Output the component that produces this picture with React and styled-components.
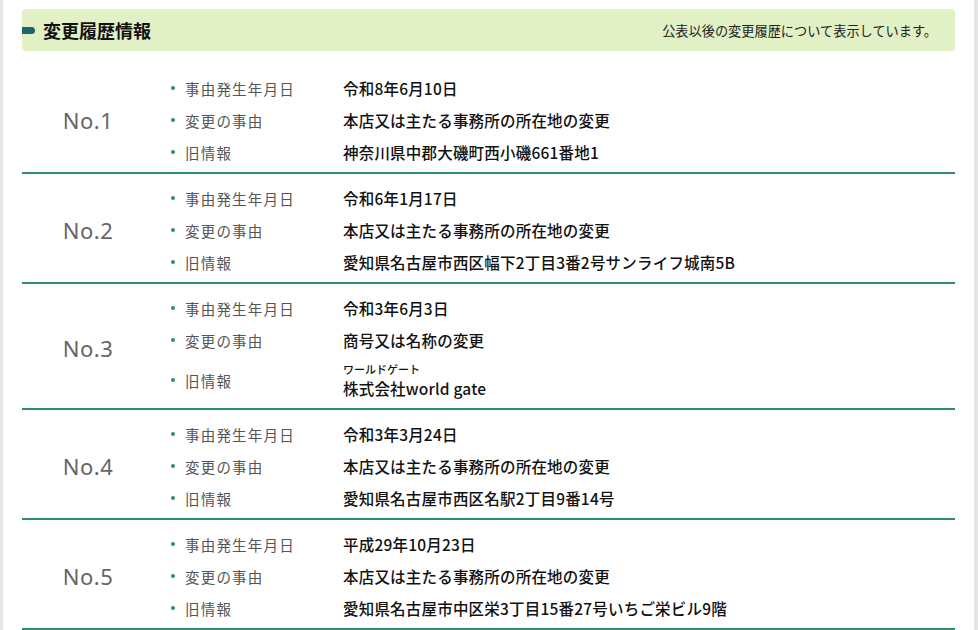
import styled, { createGlobalStyle } from 'styled-components';

const history = [
	{ no: 1, date: '令和8年6月10日', reason: '本店又は主たる事務所の所在地の変更', old: '神奈川県中郡大磯町西小磯661番地1' },
	{ no: 2, date: '令和6年1月17日', reason: '本店又は主たる事務所の所在地の変更', old: '愛知県名古屋市西区幅下2丁目3番2号サンライフ城南5B' },
	{ no: 3, date: '令和3年6月3日', reason: '商号又は名称の変更', old: '株式会社world gate', kana: 'ワールドゲート' },
	{ no: 4, date: '令和3年3月24日', reason: '本店又は主たる事務所の所在地の変更', old: '愛知県名古屋市西区名駅2丁目9番14号' },
	{ no: 5, date: '平成29年10月23日', reason: '本店又は主たる事務所の所在地の変更', old: '愛知県名古屋市中区栄3丁目15番27号いちご栄ビル9階' },
];

const GlobalStyle = createGlobalStyle`
	html, body {
		margin: 0;
		padding: 0;
		background: #e6e6e6;
	}
	body {
		font-family: 'Noto Sans CJK JP', 'Noto Sans', sans-serif;
		color: #111;
	}
`;

const Page = styled.div`
	margin: 0 4px 0 3px;
	min-height: 100vh;
	background: #fff;
	padding: 9px 19px 0 19px;
	box-sizing: border-box;
`;

const Header = styled.div`
	height: 42px;
	background: #e2f0c6;
	border-radius: 4px;
	display: flex;
	align-items: center;
	justify-content: space-between;
	padding-right: 18px;
`;

const Title = styled.h2`
	margin: 0;
	display: flex;
	align-items: center;
	gap: 8px;
	font-size: 18px;
	font-weight: 700;
	color: #111;

	&::before {
		content: '';
		width: 13px;
		height: 7px;
		border-radius: 0 4px 4px 0;
		background: #1f6468;
	}
`;

const Note = styled.p`
	margin: 0;
	font-size: 13.2px;
	color: #222;
`;

const List = styled.div`
	margin-top: 13px;
`;

const Row = styled.div`
	display: grid;
	grid-template-columns: 132px 1fr;
	align-items: center;
	padding: 8px 0 4px;
	border-bottom: 2px solid #2f8c6d;
`;

const Number = styled.div`
	text-align: center;
	font-family: 'Noto Sans', sans-serif;
	font-size: 22px;
	color: #666;
	letter-spacing: 0.5px;
`;

const Items = styled.ul`
	margin: 0;
	padding: 0;
	list-style: none;
`;

const Item = styled.li`
	display: flex;
	align-items: center;
	min-height: 32px;
	padding: ${(props) => (props.tall ? '5px 0' : '0')};
`;

const Label = styled.span`
	position: relative;
	width: 158px;
	padding-left: 31px;
	font-size: 14.5px;
	letter-spacing: 1.2px;
	color: #555;

	&::before {
		content: '';
		position: absolute;
		left: 17px;
		top: 50%;
		margin-top: -2px;
		width: 4px;
		height: 4px;
		border-radius: 50%;
		background: #2f8c6d;
	}
`;

const Value = styled.div`
	font-size: 15.5px;
	font-weight: 500;
	letter-spacing: 0.2px;
	color: #111;
	line-height: 22px;
`;

const Kana = styled.div`
	font-size: 11px;
	line-height: 16px;
	letter-spacing: 0;
	color: #111;
`;

const App = () => {
	return (
		<>
			<GlobalStyle />
			<Page>
				<Header>
					<Title>変更履歴情報</Title>
					<Note>公表以後の変更履歴について表示しています。</Note>
				</Header>
				<List>
					{history.map((item) => (
						<Row key={item.no}>
							<Number>No.{item.no}</Number>
							<Items>
								<Item>
									<Label>事由発生年月日</Label>
									<Value>{item.date}</Value>
								</Item>
								<Item>
									<Label>変更の事由</Label>
									<Value>{item.reason}</Value>
								</Item>
								<Item tall={!!item.kana}>
									<Label>旧情報</Label>
									<Value>
										{item.kana && <Kana>{item.kana}</Kana>}
										{item.old}
									</Value>
								</Item>
							</Items>
						</Row>
					))}
				</List>
			</Page>
		</>
	);
};

export default App;
